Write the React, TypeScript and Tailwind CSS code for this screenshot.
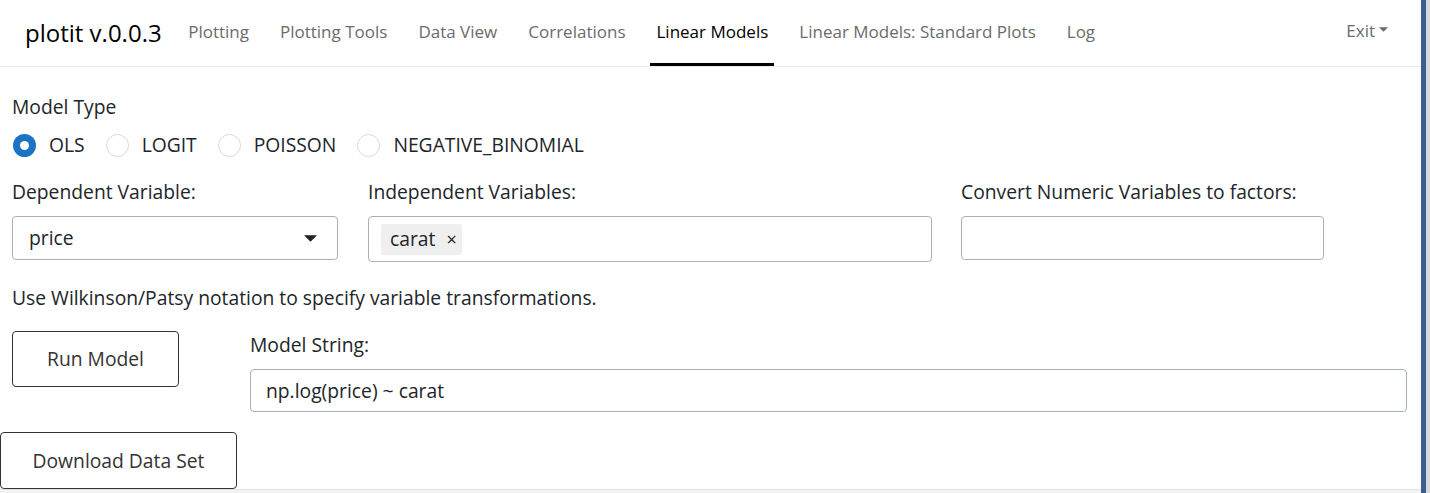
import React from "react";

const navItems = [
    "Plotting",
    "Plotting Tools",
    "Data View",
    "Correlations",
    "Linear Models",
    "Linear Models: Standard Plots",
    "Log",
];

const modelTypes = ["OLS", "LOGIT", "POISSON", "NEGATIVE_BINOMIAL"];

function Radio({ label, checked }: { label: string, checked: boolean }) {
    return (
        <label className="flex items-center mr-[21px]">
            {checked ? (
                <span className="w-[23px] h-[23px] rounded-full bg-[#1a73c4] flex items-center justify-center">
                    <span className="w-[9px] h-[9px] rounded-full bg-white" />
                </span>
            ) : (
                <span className="w-[23px] h-[23px] rounded-full border border-[#d5d9de] bg-white" />
            )}
            <span className="ml-[13px]">{label}</span>
        </label>
    );
}

function Caret({ className }: { className: string }) {
    return (
        <svg className={className} viewBox="0 0 12 6">
            <path d="M0 0 L12 0 L6 6 Z" fill="currentColor" />
        </svg>
    );
}

export default function App() {
    return (
        <div className="flex w-[1430px] h-[493px] overflow-hidden bg-white text-[#212529] font-['Open_Sans',sans-serif]">
            <div className="w-[1421px] flex flex-col">
                <nav className="h-[67px] shrink-0 border-b border-[#e7eaee] flex items-center pl-[25px] pr-[33px]">
                    <span className="text-[24px] text-black mr-[11px]">plotit v.0.0.3</span>
                    <ul className="flex h-full text-[17px]">
                        {navItems.map((item) => {
                            const active = item === "Linear Models";
                            return (
                                <li key={item} className={`h-full flex items-center px-[6px] mx-[9.5px] border-b-[3px] ${active ? "border-black text-black" : "border-transparent text-[#6b6b6b]"}`}>
                                    {item}
                                </li>
                            );
                        })}
                    </ul>
                    <div className="ml-auto flex items-center text-[17px] text-[#6b6b6b] mb-[5px]">
                        Exit
                        <Caret className="w-[9px] h-[5px] ml-[4px] mb-[3px]" />
                    </div>
                </nav>

                <main className="flex-1 flex flex-col text-[19.3px] leading-[28px]">
                    <div className="px-[12px] pt-[26px]">
                        <div>Model Type</div>
                        <div className="flex items-center mt-[10px] h-[28px] pl-[1px]">
                            {modelTypes.map((m) => <Radio key={m} label={m} checked={m === "OLS"} />)}
                        </div>

                        <div className="flex mt-[19px]">
                            <div className="w-[326px] mr-[30px]">
                                <div>Dependent Variable:</div>
                                <div className="mt-[10px] h-[44px] border border-[#a9b0b8] rounded-[4px] flex items-center pl-[16px] pr-[20px]">
                                    <span>price</span>
                                    <Caret className="ml-auto w-[13px] h-[7px] text-[#222]" />
                                </div>
                            </div>
                            <div className="w-[564px] mr-[29px]">
                                <div>Independent Variables:</div>
                                <div className="mt-[10px] h-[46px] border border-[#a9b0b8] rounded-[4px] flex items-center pl-[12px]">
                                    <span className="h-[31px] bg-[#efefef] rounded-[2px] flex items-center pl-[9px] pr-[5px]">
                                        carat
                                        <span className="ml-[11px] text-[18px]">×</span>
                                    </span>
                                </div>
                            </div>
                            <div className="w-[363px]">
                                <div>Convert Numeric Variables to factors:</div>
                                <div className="mt-[10px] h-[44px] border border-[#a9b0b8] rounded-[4px]" />
                            </div>
                        </div>

                        <div className="mt-[22px]">Use Wilkinson/Patsy notation to specify variable transformations.</div>

                        <div className="flex mt-[19px]">
                            <button className="w-[167px] h-[56px] border border-[#333] rounded-[4px] bg-white mr-[71px] text-[19.3px] text-[#333]">Run Model</button>
                            <div className="w-[1157px]">
                                <div>Model String:</div>
                                <div className="mt-[10px] h-[43px] border border-[#a9b0b8] rounded-[4px] flex items-center pl-[15px]">
                                    np.log(price) ~ carat
                                </div>
                            </div>
                        </div>
                    </div>

                    <div className="mt-[20px]">
                        <button className="w-[237px] h-[57px] border border-[#333] rounded-[4px] bg-white text-[19.3px] text-[#333]">Download Data Set</button>
                    </div>
                    <div className="flex-1 bg-[#f2f2f2] border-t border-[#e3e3e3]" />
                </main>
            </div>
            <div className="w-[5px] bg-[#3b5d8f]" />
            <div className="flex-1 bg-[#d9d9d9]" />
        </div>
    );
}
